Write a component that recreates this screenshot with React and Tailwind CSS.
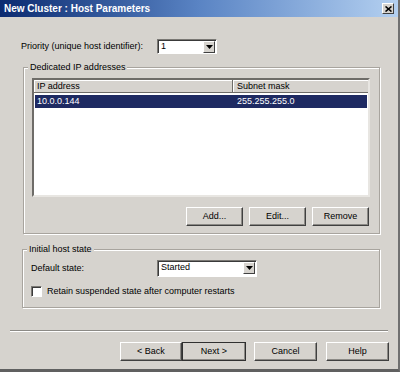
import React from "react";

const font = { fontFamily: '"Liberation Sans", Arial, sans-serif' };

function Btn({ children, w = "w-[63px]", def = false }) {
  return (
    <div
      className={`${w} h-[19px] flex items-center justify-center text-[9px] text-black bg-[#d6d3ce] border ${
        def ? "border-[#303030]" : "border-t-white border-l-white border-b-[#404040] border-r-[#404040]"
      } shadow-[inset_-1px_-1px_0_#8c8a86]`}
    >
      {children}
    </div>
  );
}

function Combo({ value, w, h = "h-[15px]" }) {
  return (
    <div className={`${w} ${h} flex items-start bg-white border border-t-[#7a7874] border-l-[#7a7874] border-b-white border-r-white shadow-[inset_1px_1px_0_#3a3a3a]`}>
      <span className="flex-1 pl-[3px] text-[9px] leading-[13px] text-black">{value}</span>
      <div className="w-[12px] h-[12px] mt-[1px] mr-[1px] bg-[#d6d3ce] border border-t-white border-l-white border-b-[#404040] border-r-[#404040] flex items-center justify-center">
        <svg width="7" height="4" viewBox="0 0 7 4"><path d="M0 0h7L3.5 4z" fill="#000" /></svg>
      </div>
    </div>
  );
}

function Group({ label, className, children }) {
  return (
    <div className={`relative border border-[#a8a49e] shadow-[1px_1px_0_#fff,inset_1px_1px_0_#fff] ${className}`}>
      <span className="absolute -top-[7px] left-[4px] px-[2px] bg-[#d6d3ce] text-[9px] leading-[12px] text-black">{label}</span>
      {children}
    </div>
  );
}

export default function App() {
  return (
    <div style={font} className="w-[400px] h-[372px] bg-[#d6d3ce] border-r-2 border-b-[3px] border-r-[#707070] border-b-[#606060] flex flex-col overflow-hidden">
      <div className="h-[17px] flex items-center bg-gradient-to-r from-[#0c2a70] via-[#5a84c4] to-[#b4d0f0] pl-[4px] pr-[4px]">
        <span className="text-white font-bold text-[10px] flex-1">New Cluster :  Host Parameters</span>
        <div className="w-[12px] h-[11px] bg-[#d6d3ce] border border-t-white border-l-white border-b-[#404040] border-r-[#404040] flex items-center justify-center">
          <svg width="7" height="6" viewBox="0 0 7 6"><path d="M0.5 0.5L6.5 5.5M6.5 0.5L0.5 5.5" stroke="#000" strokeWidth="1.6" /></svg>
        </div>
      </div>

      <div className="flex items-center mt-[22px] pl-[21px]">
        <span className="w-[136px] text-[9px] text-black">Priority (unique host identifier):</span>
        <Combo value="1" w="w-[60px]" />
      </div>

      <Group label="Dedicated IP addresses" className="ml-[23px] mt-[13px] w-[357px] h-[167px]">
        <div className="ml-[8px] mt-[10px] w-[338px] h-[119px] bg-white border-2 border-t-[#6e6c68] border-l-[#6e6c68] border-b-[#e8e6e2] border-r-[#e8e6e2]">
          <div className="flex h-[13px] text-[9px] leading-[12px] text-black">
            <div className="w-[199px] pl-[3px] bg-[#d6d3ce] border-r border-b border-r-[#6e6c68] border-b-[#6e6c68] shadow-[inset_1px_1px_0_#fff]">IP address</div>
            <div className="flex-1 pl-[4px] bg-[#d6d3ce] border-b border-b-[#6e6c68] shadow-[inset_1px_1px_0_#fff]">Subnet mask</div>
          </div>
          <div className="flex mt-[2px] mx-[1px] h-[13px] bg-[#1e2a62] text-white text-[9px] leading-[13px]">
            <span className="w-[202px] pl-[2px]">10.0.0.144</span>
            <span>255.255.255.0</span>
          </div>
        </div>
        <div className="flex justify-end gap-[6px] mr-[10px] mt-[10px]">
          <Btn w="w-[57px]">Add...</Btn>
          <Btn w="w-[57px]">Edit...</Btn>
          <Btn w="w-[57px]">Remove</Btn>
        </div>
      </Group>

      <Group label="Initial host state" className="ml-[22px] mt-[15px] w-[358px] h-[59px]">
        <div className="flex items-center mt-[10px] pl-[8px]">
          <span className="w-[126px] text-[9px] text-black">Default state:</span>
          <Combo value="Started" w="w-[100px]" h="h-[17px]" />
        </div>
        <div className="flex items-center mt-[8px] pl-[8px] gap-[5px]">
          <div className="w-[11px] h-[11px] bg-white border border-t-[#7a7874] border-l-[#7a7874] border-b-white border-r-white shadow-[inset_1px_1px_0_#3a3a3a]" />
          <span className="text-[9px] text-black">Retain suspended state after computer restarts</span>
        </div>
      </Group>

      <div className="mt-[22px] mx-[10px] h-[2px] border-t border-t-[#8c8a86] border-b border-b-white" />

      <div className="flex mt-[10px] pl-[120px]">
        <Btn w="w-[62px]">&lt; Back</Btn>
        <Btn w="w-[64px]" def>Next &gt;</Btn>
        <div className="w-[8px]" />
        <Btn w="w-[63px]">Cancel</Btn>
        <div className="w-[9px]" />
        <Btn w="w-[63px]">Help</Btn>
      </div>
    </div>
  );
}
